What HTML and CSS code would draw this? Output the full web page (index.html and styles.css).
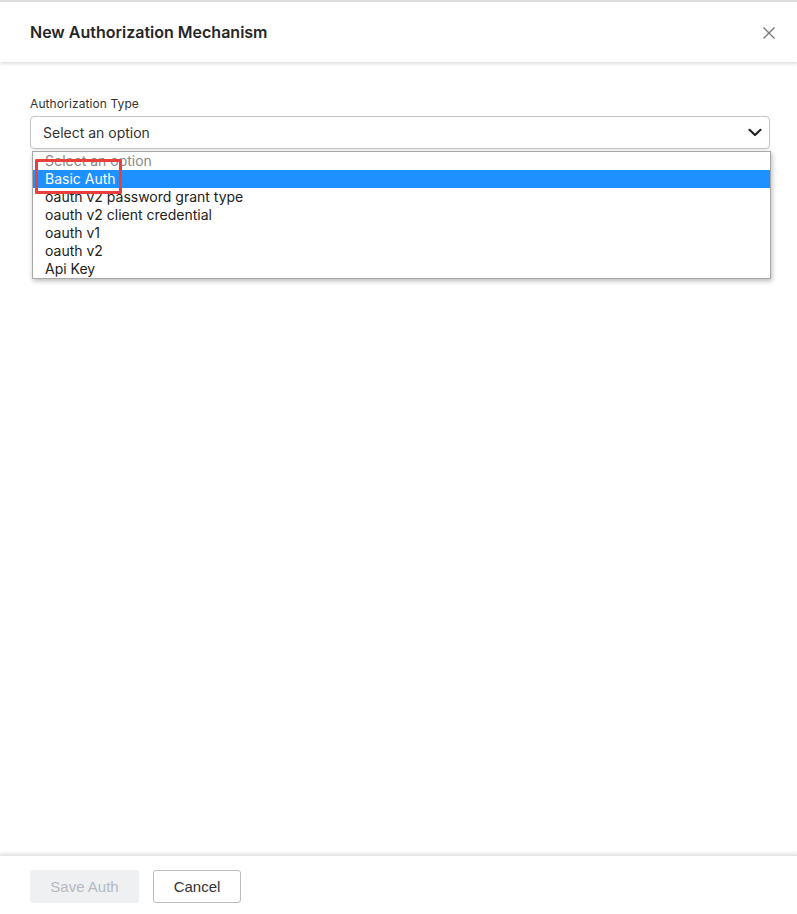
FILE: index.html
```html
<!DOCTYPE html>
<html>
<head>
<meta charset="utf-8">
<link rel="stylesheet" href="styles.css">
</head>
<body>
<div class="modal">
  <div class="topline"></div>
  <div class="header">
    <div class="title">New Authorization Mechanism</div>
    <svg class="close" width="14" height="14" viewBox="0 0 14 14"><path d="M1.5 1.5 L12.5 12.5 M12.5 1.5 L1.5 12.5" stroke="#777" stroke-width="1.3" fill="none"/></svg>
  </div>
  <div class="body">
    <div class="label">Authorization Type</div>
    <div class="select-wrap">
      <div class="select">
        <span>Select an option</span>
        <svg class="chev" width="14" height="9" viewBox="0 0 14 9"><path d="M1.5 1.8 L7 7 L12.5 1.8" stroke="#222" stroke-width="2.2" fill="none" stroke-linecap="round" stroke-linejoin="round"/></svg>
      </div>
      <div class="dropdown">
        <div class="opt placeholder">Select an option</div>
        <div class="opt active">Basic Auth</div>
        <div class="opt">oauth v2 password grant type</div>
        <div class="opt">oauth v2 client credential</div>
        <div class="opt">oauth v1</div>
        <div class="opt">oauth v2</div>
        <div class="opt">Api Key</div>
        <div class="mark"></div>
      </div>
    </div>
  </div>
  <div class="footer">
    <button class="btn save">Save Auth</button>
    <button class="btn cancel">Cancel</button>
  </div>
</div>
</body>
</html>
```

FILE: styles.css
```css
* { box-sizing: border-box; }
html, body { margin: 0; padding: 0; background: #fff; }
body { font-family: Inter, "Noto Sans", sans-serif; color: #333; }
.modal { width: 797px; height: 914px; display: flex; flex-direction: column; }
.topline { height: 2px; background: #dedede; flex: none; }
.header {
  height: 60px; flex: none; display: flex; align-items: center; justify-content: space-between;
  padding: 0 21px 0 30px; box-shadow: 0 2px 3px rgba(0,0,0,0.13); position: relative; z-index: 1;
}
.title { font-size: 16px; font-weight: 600; color: #262626; }
.close { display: block; margin-top: 1px; }
.body { flex: 1; padding: 34px 27px 0 30px; }
.label { font-size: 12px; line-height: 15px; color: #333; margin-bottom: 5px; letter-spacing: 0.1px; }
.select-wrap { position: relative; }
.select {
  height: 33px; border: 1px solid #c4c4c4; border-radius: 4px; display: flex; align-items: center;
  justify-content: space-between; padding: 0 7px 0 12px; font-size: 14px; color: #333;
  box-shadow: 0 1px 2px rgba(0,0,0,0.06);
}
.chev { display: block; }
.dropdown {
  position: absolute; left: 2px; top: 35px; width: 739px; border: 1px solid #a8a8a8;
  background: #fff; box-shadow: 1px 2px 5px rgba(0,0,0,0.28);
}
.opt { height: 18px; line-height: 18px; font-size: 14px; padding-left: 12px; color: #222; white-space: nowrap; }
.opt.placeholder { color: #8a8a8a; }
.opt.active { background: #1e90ff; color: #fff; }
.mark {
  position: absolute; left: 2px; top: 7px; width: 87px; height: 35px;
  border: 3px solid #e8413c; border-radius: 1px;
}
.footer {
  flex: none; height: 59px; padding: 14px 30px 0; display: flex; gap: 14px; align-items: flex-start;
  box-shadow: 0 -2px 3px rgba(0,0,0,0.1); border-top: 1px solid #e6e6e6;
}
.btn {
  height: 33px; font-family: "Liberation Sans", Arial, sans-serif; font-size: 15px; border-radius: 3px;
  margin: 0; padding: 0 0 1px;
}
.save { width: 109px; background: #eef0f2; border: none; color: #b5b9bf; }
.cancel { width: 88px; background: #fff; border: 1px solid #bdbdbd; color: #333; }
```
